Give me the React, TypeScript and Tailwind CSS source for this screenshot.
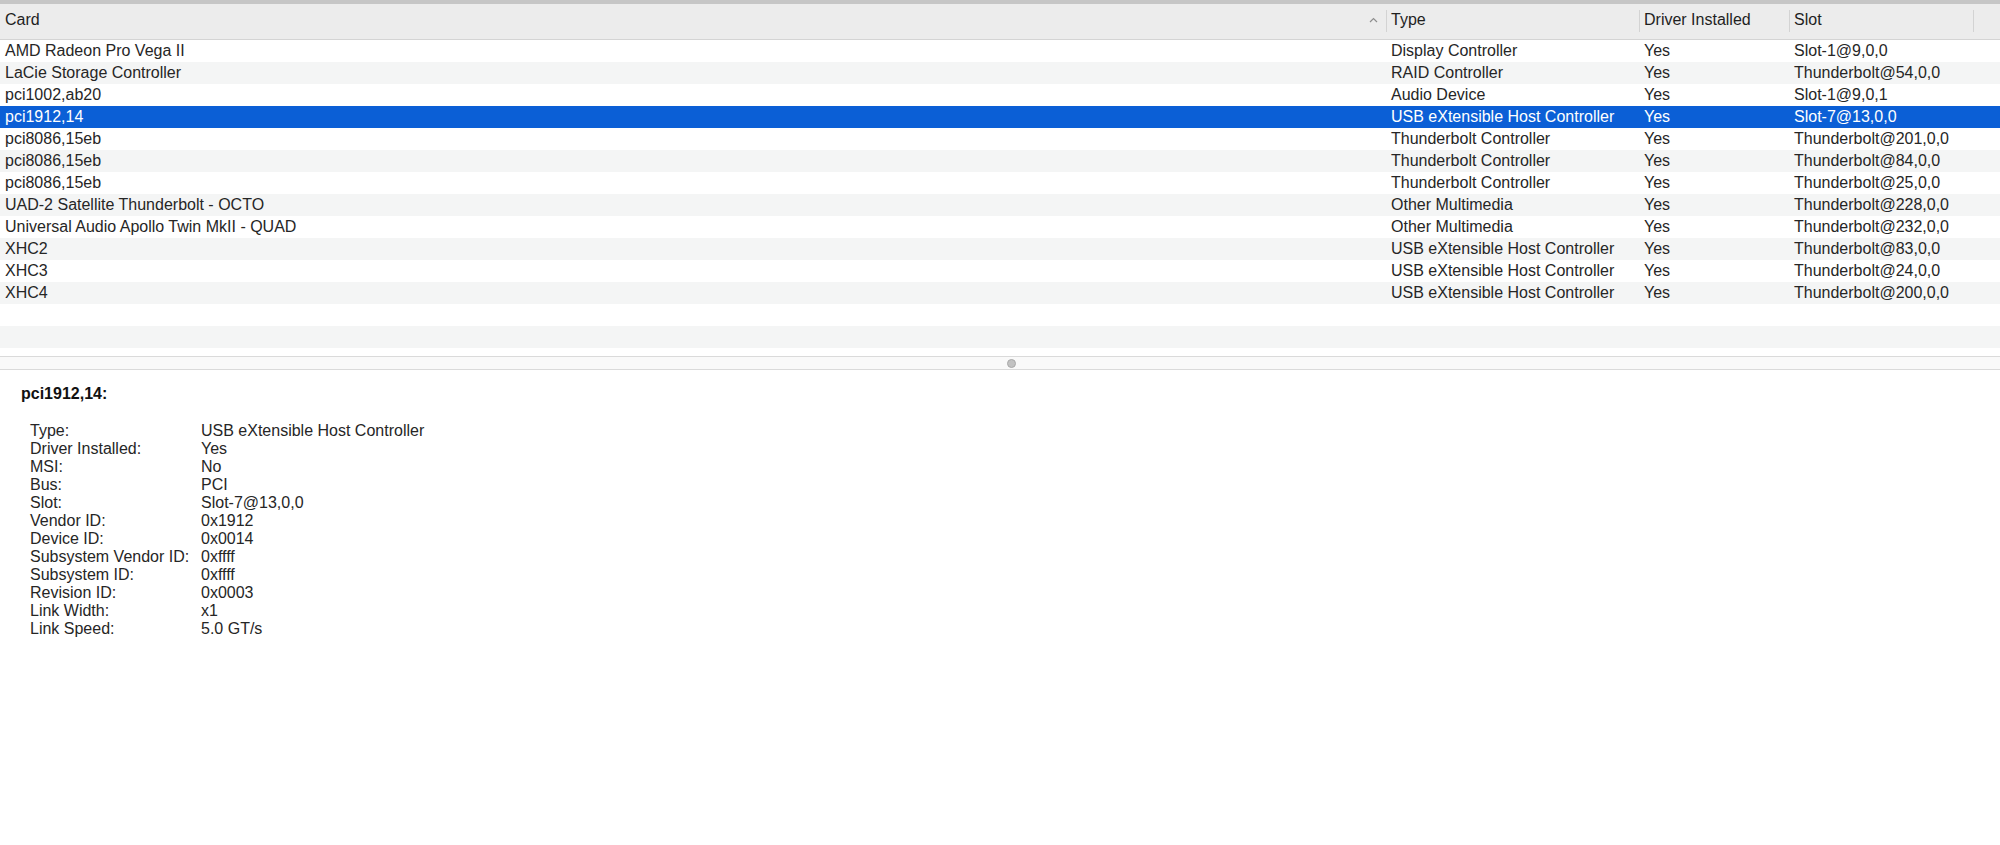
const rows = [
  { card: 'AMD Radeon Pro Vega II', type: 'Display Controller', driver: 'Yes', slot: 'Slot-1@9,0,0' },
  { card: 'LaCie Storage Controller', type: 'RAID Controller', driver: 'Yes', slot: 'Thunderbolt@54,0,0' },
  { card: 'pci1002,ab20', type: 'Audio Device', driver: 'Yes', slot: 'Slot-1@9,0,1' },
  { card: 'pci1912,14', type: 'USB eXtensible Host Controller', driver: 'Yes', slot: 'Slot-7@13,0,0' },
  { card: 'pci8086,15eb', type: 'Thunderbolt Controller', driver: 'Yes', slot: 'Thunderbolt@201,0,0' },
  { card: 'pci8086,15eb', type: 'Thunderbolt Controller', driver: 'Yes', slot: 'Thunderbolt@84,0,0' },
  { card: 'pci8086,15eb', type: 'Thunderbolt Controller', driver: 'Yes', slot: 'Thunderbolt@25,0,0' },
  { card: 'UAD-2 Satellite Thunderbolt - OCTO', type: 'Other Multimedia', driver: 'Yes', slot: 'Thunderbolt@228,0,0' },
  { card: 'Universal Audio Apollo Twin MkII - QUAD', type: 'Other Multimedia', driver: 'Yes', slot: 'Thunderbolt@232,0,0' },
  { card: 'XHC2', type: 'USB eXtensible Host Controller', driver: 'Yes', slot: 'Thunderbolt@83,0,0' },
  { card: 'XHC3', type: 'USB eXtensible Host Controller', driver: 'Yes', slot: 'Thunderbolt@24,0,0' },
  { card: 'XHC4', type: 'USB eXtensible Host Controller', driver: 'Yes', slot: 'Thunderbolt@200,0,0' },
]

const SELECTED = 3

const details: [string, string][] = [
  ['Type:', 'USB eXtensible Host Controller'],
  ['Driver Installed:', 'Yes'],
  ['MSI:', 'No'],
  ['Bus:', 'PCI'],
  ['Slot:', 'Slot-7@13,0,0'],
  ['Vendor ID:', '0x1912'],
  ['Device ID:', '0x0014'],
  ['Subsystem Vendor ID:', '0xffff'],
  ['Subsystem ID:', '0xffff'],
  ['Revision ID:', '0x0003'],
  ['Link Width:', 'x1'],
  ['Link Speed:', '5.0 GT/s'],
]

// column template shared by header and rows
const cols = 'grid grid-cols-[1386px_253px_150px_184px_1fr]'

function HeaderCell({ label, divider = true, sort = false }: { label?: string; divider?: boolean; sort?: boolean }) {
  return (
    <div className="relative h-full pt-[5px] pl-[5px]">
      {divider && <span className="absolute top-[6px] left-0 h-[22px] w-px bg-[#d3d3d3]" />}
      {label && <span className="font-medium text-[#1f1f1f]">{label}</span>}
      {sort && (
        <svg className="absolute top-[13px] right-[8px]" width="9" height="6" viewBox="0 0 9 6" fill="none">
          <polyline points="1,5 4.5,1.5 8,5" stroke="#8e8e8e" strokeWidth="1.2" />
        </svg>
      )}
    </div>
  )
}

export default function App() {
  return (
    <div
      className="flex h-[845px] w-[2000px] flex-col overflow-hidden bg-white text-[16px] leading-[22px] text-[#262626]"
      style={{ fontFamily: '"Liberation Sans", Arial, sans-serif' }}
    >
      <div className="h-[4px] shrink-0 bg-[#c6c6c6]" />

      {/* table header */}
      <div className={`${cols} h-[36px] shrink-0 border-b border-[#d4d4d4] bg-[#ececec]`}>
        <HeaderCell label="Card" divider={false} sort />
        <HeaderCell label="Type" />
        <HeaderCell label="Driver Installed" />
        <HeaderCell label="Slot" />
        <HeaderCell />
      </div>

      {/* rows */}
      <div className="flex h-[316px] shrink-0 flex-col">
        {rows.map((r, i) => (
          <div
            key={i}
            className={`${cols} h-[22px] shrink-0 ${
              i === SELECTED ? 'bg-[#0b5fd6] text-white' : i % 2 === 1 ? 'bg-[#f4f5f5]' : 'bg-white'
            }`}
          >
            <div className="truncate pl-[5px]">{r.card}</div>
            <div className="truncate pl-[5px]">{r.type}</div>
            <div className="truncate pl-[5px]">{r.driver}</div>
            <div className="truncate pl-[5px]">{r.slot}</div>
            <div />
          </div>
        ))}
        <div className="h-[22px] shrink-0 bg-white" />
        <div className="h-[22px] shrink-0 bg-[#f4f5f5]" />
      </div>

      {/* split view divider */}
      <div className="flex h-[14px] shrink-0 items-center border-y border-[#dadada] bg-[#f9f9f9] pl-[1007px]">
        <span className="size-[9px] rounded-full border border-[#a9a9a9] bg-[#c2c2c2]" />
      </div>

      {/* detail pane */}
      <div className="flex-1 pt-[15px] pl-[21px] leading-[18px]">
        <div className="font-bold text-[#111]">pci1912,14:</div>
        <div className="mt-[19px] grid grid-cols-[171px_1fr] pl-[9px]">
          {details.map(([k, v]) => (
            <div key={k} className="contents">
              <div>{k}</div>
              <div>{v}</div>
            </div>
          ))}
        </div>
      </div>
    </div>
  )
}
